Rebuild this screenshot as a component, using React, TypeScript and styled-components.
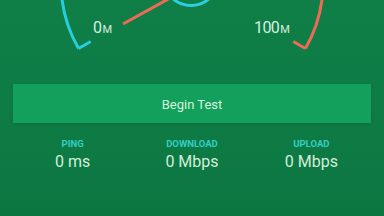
import React from 'react';
import styled, { createGlobalStyle } from 'styled-components';

const GlobalStyle = createGlobalStyle`
  html, body {
    margin: 0;
    padding: 0;
    background: #0e7b45;
  }
  body {
    font-family: Roboto, "Liberation Sans", Arial, sans-serif;
  }
`

const Screen = styled.div`
  width: 384px;
  height: 216px;
  overflow: hidden;
  background: linear-gradient(180deg, #0f7e47 0%, #0e7b45 60%, #0c7641 100%);
  display: flex;
  flex-direction: column;
  padding: 0 13px;
  box-sizing: border-box;
`

const Gauge = styled.div`
  position: relative;
  height: 84px;
  margin: 0 -13px;
`

const GaugeSvg = styled.svg`
  display: block;
`

const Mark = styled.span<{ $left: number }>`
  position: absolute;
  top: 19px;
  left: ${p => p.$left}px;
  color: #d6efe0;
  font-size: 16px;
  letter-spacing: -0.6px;
  line-height: 18px;
  white-space: nowrap;
`

const Unit = styled.span`
  font-size: 11px;
  letter-spacing: 0;
  margin-left: 1px;
`

const StartButton = styled.button`
  height: 39px;
  border: none;
  border-radius: 0;
  background: #12a05c;
  color: #d4f5dc;
  font-family: Roboto, "Liberation Sans", Arial, sans-serif;
  font-size: 13px;
  box-shadow: 0 1px 3px rgba(0, 0, 0, .12);
  cursor: pointer;
  padding: 2px 0 0;
`

const Stats = styled.div`
  display: grid;
  grid-template-columns: repeat(3, 1fr);
  margin-top: 15px;
`

const Stat = styled.div`
  display: flex;
  flex-direction: column;
  align-items: center;
`

const StatLabel = styled.div`
  color: #33cfc4;
  font-size: 9.5px;
  font-weight: 700;
  line-height: 12px;
`

const StatValue = styled.div`
  color: #d3eedb;
  font-size: 16px;
  line-height: 20px;
  margin-top: 2px;
`

const cx = 192;
const cy = -17;
const r = 131;

const point = (deg: number, radius = r) => {
  const a = (deg * Math.PI) / 180;
  return [cx + radius * Math.cos(a), cy + radius * Math.sin(a)];
};

const arc = (from: number, to: number) => {
  const [x1, y1] = point(from);
  const [x2, y2] = point(to);
  return `M ${x1} ${y1} A ${r} ${r} 0 0 1 ${x2} ${y2}`;
};

const tick = (deg: number) => {
  const [x1, y1] = point(deg);
  const [x2, y2] = point(deg, r - 14);
  return `M ${x1} ${y1} L ${x2} ${y2}`;
};

const stats = [
  { label: 'PING', value: '0 ms' },
  { label: 'DOWNLOAD', value: '0 Mbps' },
  { label: 'UPLOAD', value: '0 Mbps' },
];

const App: React.FC = () => {
  return (
    <>
      <GlobalStyle />
      <Screen>
        <Gauge>
          <GaugeSvg width={384} height={84} viewBox="0 0 384 84">
            <g fill="none" strokeWidth={3} strokeLinecap="butt" strokeLinejoin="miter">
              {/* left half of the dial, then the right half */}
              <path d={arc(150, 270)} stroke="#27cde0" />
              <path d={arc(270, 390)} stroke="#ef6b57" />
              <path d={tick(150)} stroke="#27cde0" />
              <path d={tick(30)} stroke="#ef6b57" />
              {/* needle */}
              <path d="M 123 24 L 171 -2.5" stroke="#ef6b57" />
              {/* hub */}
              <circle cx={191} cy={-22} r={27.5} stroke="#2bd0e0" />
            </g>
          </GaugeSvg>
          <Mark $left={93}>0<Unit>M</Unit></Mark>
          <Mark $left={254}>100<Unit>M</Unit></Mark>
        </Gauge>
        <StartButton>Begin Test</StartButton>
        <Stats>
          {stats.map(s => (
            <Stat key={s.label}>
              <StatLabel>{s.label}</StatLabel>
              <StatValue>{s.value}</StatValue>
            </Stat>
          ))}
        </Stats>
      </Screen>
    </>
  );
}

export default App;
